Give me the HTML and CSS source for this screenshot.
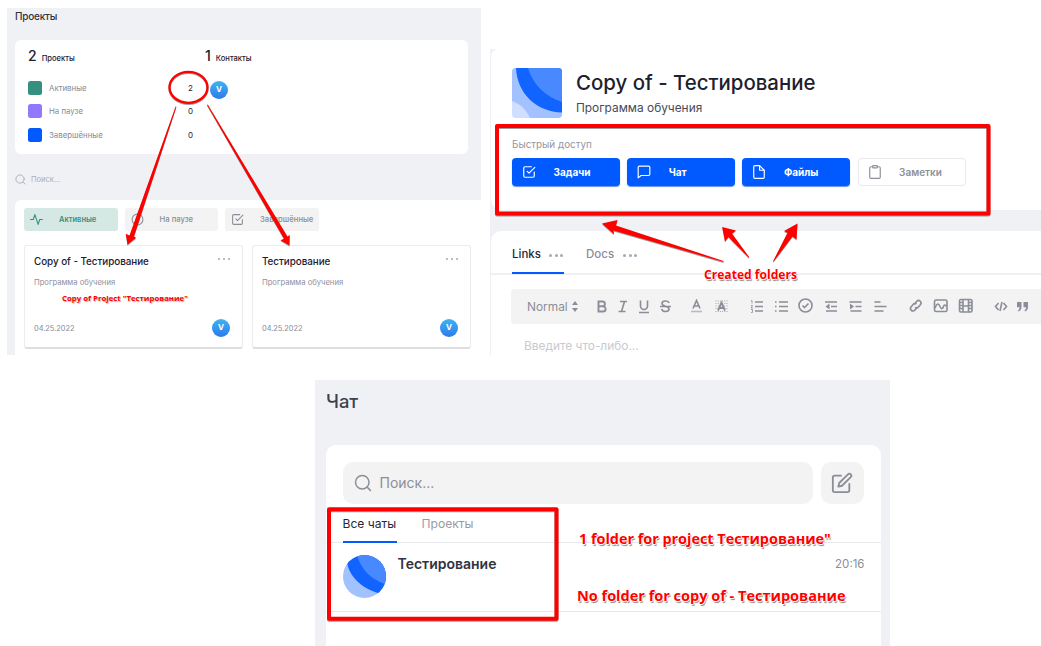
FILE: index.html
```html
<!DOCTYPE html>
<html lang="ru">
<head>
<meta charset="utf-8">
<title>Проекты</title>
<link rel="stylesheet" href="styles.css">
</head>
<body>
<svg class="defs" width="0" height="0">
  <symbol id="check" viewBox="0 0 24 24"><path d="M9 11l3 3L22 4"/><path d="M21 12v7a2 2 0 0 1-2 2H5a2 2 0 0 1-2-2V5a2 2 0 0 1 2-2h11"/></symbol>
  <symbol id="search" viewBox="0 0 24 24"><circle cx="11" cy="11" r="9"/><path d="M17.5 17.5L22 22"/></symbol>
</svg>
<main class="board">
  <div class="top">
    <section class="projects">
      <h1 class="projects-title"><span>Проекты</span></h1>
      <div class="stats">
        <div class="stats-left">
          <div class="stat-head"><b>2</b><span>Проекты</span></div>
          <div class="stat-row"><i class="swatch green"></i><span>Активные</span><em>2</em></div>
          <div class="stat-row"><i class="swatch purple"></i><span>На паузе</span><em>0</em></div>
          <div class="stat-row"><i class="swatch blue"></i><span>Завершённые</span><em>0</em></div>
        </div>
        <div class="stats-right">
          <div class="stat-head"><b>1</b><span>Контакты</span></div>
          <div class="avatar">V</div>
        </div>
      </div>
      <div class="find"><svg class="ic" width="11" height="11"><use href="#search"/></svg><span>Поиск...</span></div>
      <div class="list">
        <div class="filters">
          <div class="filter on"><svg class="ic" width="13" height="13" viewBox="0 0 24 24"><path d="M1 12h5l3-9 6 18 3-9h5"/></svg><span>Активные</span></div>
          <div class="filter"><svg class="ic" width="13" height="13" viewBox="0 0 24 24"><circle cx="12" cy="12" r="10"/><path d="M10 9v6M14 9v6"/></svg><span>На паузе</span></div>
          <div class="filter"><svg class="ic" width="13" height="13"><use href="#check"/></svg><span>Завершённые</span></div>
        </div>
        <div class="cards">
          <article class="card">
            <div class="card-head"><h2>Copy of - Тестирование</h2><span class="dots"><i></i><i></i><i></i></span></div>
            <p>Программа обучения</p>
            <div class="card-foot"><time>04.25.2022</time><div class="avatar">V</div></div>
          </article>
          <article class="card">
            <div class="card-head"><h2>Тестирование</h2><span class="dots"><i></i><i></i><i></i></span></div>
            <p>Программа обучения</p>
            <div class="card-foot"><time>04.25.2022</time><div class="avatar">V</div></div>
          </article>
        </div>
      </div>
    </section>

    <section class="detail">
      <header class="detail-head">
        <div class="identity">
          <svg class="cover" width="50" height="50" viewBox="0 0 50 50"><rect width="50" height="50" fill="#d0dfff"/><path d="M0 0H50V50H18C14 41 8 36 0 33Z" fill="#a2c1ff"/><path d="M4 0H50V44.500C24 44 5 25 4 0Z" fill="#1164ff"/><path d="M16 0H50V34C34 29 21 17 16 0Z" fill="#4889ff"/></svg>
          <div><h2 class="detail-title">Copy of - Тестирование</h2><p class="detail-sub">Программа обучения</p></div>
        </div>
        <p class="quick-label"><span>Быстрый доступ</span></p>
        <div class="quick">
          <div class="btn"><svg class="ic" width="14" height="14"><use href="#check"/></svg><span>Задачи</span></div>
          <div class="btn"><svg class="ic" width="14" height="14" viewBox="0 0 24 24"><path d="M22 16a2 2 0 0 1-2 2H7l-5 4V4a2 2 0 0 1 2-2h16a2 2 0 0 1 2 2z"/></svg><span>Чат</span></div>
          <div class="btn"><svg class="ic" width="14" height="14" viewBox="0 0 24 24"><path d="M13 1H5a2 2 0 0 0-2 2v18a2 2 0 0 0 2 2h14a2 2 0 0 0 2-2V9z"/><path d="M13 1v8h8"/></svg><span>Файлы</span></div>
          <div class="btn plain"><svg class="ic" width="14" height="14" viewBox="0 0 24 24"><path d="M16 3h3a2 2 0 0 1 2 2v16a2 2 0 0 1-2 2H5a2 2 0 0 1-2-2V5a2 2 0 0 1 2-2h3"/><rect x="8" y="1" width="8" height="4" rx="1"/></svg><span>Заметки</span></div>
        </div>
      </header>
      <div class="notes">
        <nav class="tabs">
          <div class="tab on"><span>Links</span><span class="dots big"><i></i><i></i><i></i></span></div>
          <div class="tab"><span>Docs</span><span class="dots big"><i></i><i></i><i></i></span></div>
        </nav>
        <div class="toolbar">
          <span class="style-pick">Normal</span>
          <svg class="tools" width="469" height="35" viewBox="572 289 469 35">
            <g class="solid"><path d="M572 305l3-4 3 4zM572 308l3 4 3-4z"/></g>
            <g class="bold"><path d="M598.500 301.500h4a2.300 2.300 0 0 1 0 4.800h-4zM598.500 306.300h4.500a2.500 2.500 0 0 1 0 5.200h-4.500z"/></g>
            <g class="line">
              <path d="M620 301.500h7M618.500 311.500h7M624.500 301.500l-3 10"/>
              <path d="M640.500 300.500v5.500a3.500 3.500 0 0 0 7 0v-5.500M639 312.500h10"/>
              <path d="M669 303c-.5-1.500-2-2-3.500-2-2 0-3.500 1-3.500 2.500 0 3.500 7 2 7 5.500 0 1.500-1.500 2.500-3.500 2.500s-3.500-1-3.800-2.500M660 306.500h11"/>
              <path d="M693 308.500l3.500-8 3.500 8M694.500 306h4"/><path class="light" d="M691 311.500h11"/>
            </g>
            <path class="hatch" d="M715.500 301h12M715.500 303.500h12M715.500 306h12M715.500 308.500h12M715.500 311.500h12"/>
            <g class="bold"><path d="M718 310.500l3.500-8 3.500 8M719.500 308h4"/></g>
            <g class="line">
              <path d="M755 302h8M755 306.500h8M755 311h8"/><path class="fine" d="M751 300.500h1v3M751 305.500h1.500l-1.500 2.500h2M751 309.500h1.500v3H751"/>
              <path d="M779 302h9M779 306.500h9M779 311h9M775 302h1.500M775 306.500h1.500M775 311h1.500"/>
              <circle cx="805.500" cy="305.500" r="6.500"/><path d="M802.500 305.500l2 2 4-4"/>
              <path d="M825 302h12M831 306.500h6M826 311h11"/>
              <path d="M849.500 302h12M855.500 306.500h6M850.500 311h11"/>
              <path d="M874.500 302h6M874.500 306.500h12M874.500 311h9"/>
              <path d="M914 304.500l3-3.500a2.500 2.500 0 0 1 3.500 3.500l-2.500 3a2.500 2.500 0 0 1-3 0M917.500 307l-2.500 3a2.500 2.500 0 0 1-4-3l2.500-3a2.500 2.500 0 0 1 3 0"/>
              <rect x="934.500" y="300" width="12.500" height="11.500" rx="1.500"/><path d="M935 308c2-5 3.500-5 5-1.500s3 2 3.500 0 2-2 3 0"/>
              <rect x="959.500" y="299.500" width="12.500" height="12.500" rx="1.500"/><path d="M963 299.500v12.500M968.500 299.500v12.500M963 306h5.500M959.500 302.500h3.500M959.500 305.500h3.500M959.500 308.500h3.500M968.500 302.500h3.500M968.500 305.500h3.500M968.500 308.500h3.500"/>
              <path d="M998.500 303l-3 3.500 3 3.500M1003.500 303l3 3.500-3 3.500M1002 302l-2 9"/>
            </g>
            <g class="solid"><path d="M825.500 306.500l4-3v6zM854 306.500l-4-3v6z"/><path d="M1017 302h4.500v5c0 2-1 4-3 4.500l-.5-1.200c1-.5 1.500-1.500 1.500-3h-2.500zM1023.500 302h4.500v5c0 2-1 4-3 4.500l-.5-1.200c1-.5 1.500-1.500 1.500-3h-2.500z"/></g>
          </svg>
        </div>
        <p class="placeholder"><span>Введите что-либо...</span></p>
      </div>
    </section>
  </div>

  <section class="chat">
    <h2 class="chat-title">Чат</h2>
    <div class="chat-box">
      <div class="chat-search">
        <div class="field"><svg class="ic" width="18" height="18"><use href="#search"/></svg><span>Поиск...</span></div>
        <div class="compose"><svg class="ic" width="22" height="22" viewBox="0 0 24 24"><path d="M11 4H4a2 2 0 0 0-2 2v14a2 2 0 0 0 2 2h14a2 2 0 0 0 2-2v-7"/><path d="M18.500 2.500a2.121 2.121 0 0 1 3 3L12 15l-4 1 1-4 9.500-9.500z"/></svg></div>
      </div>
      <nav class="chat-tabs"><div class="on">Все чаты</div><div>Проекты</div></nav>
      <div class="thread">
        <svg class="thread-pic" width="43" height="43" viewBox="0 0 43 43"><rect width="43" height="43" fill="#a2c1ff"/><path d="M4 0H43V38H35C18 33 6 21 4 7Z" fill="#1164ff"/><path d="M14 0H43V29.500C29 25 18 15 14 0Z" fill="#4889ff"/></svg>
        <span class="thread-name">Тестирование</span><time>20:16</time>
      </div>
    </div>
  </section>
</main>

<svg class="marks" width="1041" height="646" viewBox="0 0 1041 646">
  <g class="boxes"><ellipse cx="188.500" cy="87.300" rx="19" ry="15.500"/><rect x="497" y="126" width="491.500" height="87.500"/><rect x="329" y="509.200" width="227.500" height="109.500"/></g>
  <g class="arrows">
    <path d="M175.600 106.500l.8.300-42.400 129.700 2 1.200-8.500 7-1.700-11 3.700 1.700z"/>
    <path d="M207 105l.8-.5 79.700 132 2.200-1.500-.2 10.500-9-5.200 3.500-1.500z"/>
    <path d="M723.500 261.900L613.500 230.500L614 234.300L602 223.500L617.500 220L616 225.500L723.500 261Z"/>
    <path d="M748.800 257.800L728.500 237L725 241.500L722.200 227L736 230.500L732 233.500L749.300 257.300Z"/>
    <path d="M773 261.300L787.500 232.800L784 231L797.500 223.500L796.500 239.500L792.500 236.500L773.600 261.600Z"/>
  </g>
</svg>
<div class="note n1">Copy of Project "Тестирование"</div>
<div class="note n2">Created folders</div>
<div class="note n3">1 folder for project Тестирование"</div>
<div class="note n4">No folder for copy of - Тестирование</div>
</body>
</html>
```
FILE: styles.css
```css
* { box-sizing: border-box; margin: 0; padding: 0; }
body { width: 1041px; height: 646px; overflow: hidden; position: relative; background: #fff; font-family: Inter, "Open Sans", sans-serif; color: #1d2030; }
h1, h2, b { font-weight: 500; }
em, i { font-style: normal; }
span, time, h2, .note { white-space: nowrap; }
.defs { position: absolute; }
.ic { fill: none; stroke: currentColor; stroke-width: 2; stroke-linecap: round; stroke-linejoin: round; flex: none; }
.board { display: flex; flex-direction: column; height: 646px; padding-top: 8px; }
.top { display: flex; gap: 9px; height: 372px; padding-left: 7px; align-items: flex-start; }

.projects { width: 474px; height: 347px; background: #f0f1f5; padding-left: 8px; overflow: hidden; }
.projects-title { height: 32px; line-height: 17px; font-size: 10px; letter-spacing: -.2px; color: #30333f; }
.stats { display: flex; width: 453px; height: 114px; border-radius: 6px; background: #fff; padding: 6px 13px; }
.stats-left { width: 177px; }
.stat-head { display: flex; align-items: baseline; gap: 5px; height: 30px; line-height: 19px; }
.stat-head b { font-size: 14px; }
.stat-head span { font-size: 7.600px; font-weight: 500; }
.stat-row { display: flex; align-items: center; height: 23.500px; font-size: 7.850px; color: #858995; }
.stat-row span { width: 139px; margin-left: 7px; }
.stat-row em { color: #252838; font-size: 8px; }
.swatch { width: 14px; height: 14px; border-radius: 2.500px; }
.green { background: #359080; }
.purple { background: #9278ff; }
.blue { background: #005aff; }
.avatar { width: 18px; height: 18px; border-radius: 50%; background: linear-gradient(#3db4f1, #2e7be9); color: #fff; font-size: 8px; font-weight: 700; line-height: 17px; text-align: center; }
.stats-right .avatar { margin: 5px 0 0 5px; }
.find { display: flex; align-items: center; gap: 5px; height: 46px; padding-top: 4px; font-size: 7.500px; color: #a9adba; }
.list { height: 155px; background: #fff; border-top-left-radius: 6px; padding: 8px 0 0 9px; }
.filters { display: flex; gap: 7px; height: 37px; }
.filter { display: flex; align-items: center; width: 93.500px; height: 23px; border-radius: 3px; background: #f3f3f3; color: #8b8e98; font-size: 7.700px; font-weight: 500; padding-left: 6px; }
.filter span { margin-left: 16px; }
.filter.on { background: #d5e8e4; color: #359080; }
.filter.on span { font-weight: 600; font-size: 7.500px; }
.cards { display: flex; gap: 9px; }
.card { width: 219px; height: 104px; border: 1px solid #ececef; border-bottom: 2px solid #dedee1; border-radius: 3px; padding: 8px 12px 0 9px; }
.card-head { display: flex; justify-content: space-between; }
.card h2 { font-size: 9.900px; line-height: 14px; letter-spacing: -.05px; }
.dots { display: flex; gap: 2.500px; margin-top: 4px; height: 2px; }
.dots i { width: 2.300px; height: 2.300px; border-radius: 50%; background: #a3a8b7; }
.card p { font-size: 7.650px; line-height: 12px; margin-top: 9px; color: #8e919c; }
.card-foot { display: flex; justify-content: space-between; align-items: center; margin-top: 30px; font-size: 7.400px; color: #858995; }

.detail { width: 551px; height: 306px; margin-top: 41px; background: #f0f1f5; padding-left: 1px; }
.detail-head { height: 161px; background: #fff; padding: 19px 0 0 21px; border-radius: 8px 0 0 10px; }
.identity { display: flex; gap: 14px; height: 66px; }
.cover { border-radius: 4px; }
.detail-title { font-size: 20.400px; line-height: 30px; }
.detail-sub { font-size: 11.900px; line-height: 19px; color: #474a58; }
.quick-label { font-size: 9.900px; line-height: 20px; height: 24px; color: #93969f; }
.quick { display: flex; gap: 7.200px; }
.btn { display: flex; align-items: center; width: 108px; height: 28px; border-radius: 4px; background: #005aff; color: #fff; font-size: 10px; font-weight: 700; padding-left: 10px; box-shadow: 0 1px 1px #6591e8; }
.btn span { margin-left: 17.500px; }
.btn.plain { background: #fff; color: #8d909a; font-weight: 600; border: 1px solid #e9e9ec; box-shadow: none; padding-left: 9px; }
.notes { height: 124px; margin-top: 21px; background: #fff; border-top-left-radius: 10px; }
.tabs { display: flex; gap: 22px; height: 44px; border-bottom: 2px solid #eff0f3; padding-left: 21px; font-size: 11.500px; font-weight: 500; color: #8b8e98; }
.tab { display: flex; justify-content: space-between; width: 52px; height: 43px; line-height: 46px; }
.tab.on { color: #252838; border-bottom: 2px solid #005aff; }
.dots.big { margin: 22.500px 1px 0 0; gap: 2.500px; }
.dots.big i { width: 3px; height: 3px; }
.toolbar { display: flex; height: 35px; margin: 14px 0 0 19.500px; background: #f3f3f3; border-radius: 4px 0 0 4px; padding-left: 16.500px; color: #8b8e98; }
.style-pick { width: 45px; font-size: 11.900px; line-height: 35px; }
.tools { fill: none; stroke: #8b8e98; stroke-width: 1.600; }
.tools .solid { fill: #8b8e98; stroke: none; }
.tools .bold { stroke-width: 1.900; }
.tools .fine { stroke-width: .8; }
.tools .light { stroke: #b9bbc1; }
.hatch { stroke: #a5a8af; stroke-width: 1; stroke-dasharray: 1 1.200; }
.placeholder { font-size: 11.900px; line-height: 20px; margin-top: 12px; padding-left: 33px; color: #c8cad0; }

.chat { width: 575px; height: 266px; margin-left: 315px; background: #f0f1f5; padding: 0 9px 0 11px; }
.chat-title { font-size: 18.400px; line-height: 43px; height: 64.500px; color: #3e414d; }
.chat-box { height: 202px; background: #fff; border-radius: 10px 10px 0 0; padding-top: 17px; }
.chat-search { display: flex; gap: 8.500px; padding-left: 16.500px; }
.field { display: flex; align-items: center; gap: 8px; width: 470px; height: 42px; background: #f3f3f3; border-radius: 10px; padding-left: 11px; color: #8b8e98; font-size: 14px; }
.compose { display: flex; align-items: center; justify-content: center; width: 42.500px; height: 42px; border-radius: 10px; background: #f3f3f3; color: #8b8e98; }
.chat-tabs { display: flex; gap: 25px; height: 39px; border-bottom: 1px solid #e7e8ec; padding-left: 16.500px; font-size: 12.100px; line-height: 40px; color: #989ba4; }
.chat-tabs .on { width: 54px; white-space: nowrap; color: #252838; border-bottom: 2px solid #005aff; height: 39px; }
.thread { display: flex; height: 69px; border-bottom: 1px solid #e7e8ec; padding: 12px 16.500px 0; }
.thread-pic { border-radius: 50%; }
.thread-name { flex: 1; margin-left: 12px; font-size: 14px; font-weight: 600; line-height: 17px; color: #303341; }
.thread time { font-size: 11.500px; line-height: 18px; color: #8b8e98; }

.marks { position: absolute; left: 0; top: 0; filter: drop-shadow(.5px 1px .5px rgba(60, 60, 60, .5)); }
.boxes { fill: none; stroke: #f00; stroke-width: 4; stroke-linejoin: round; }
.boxes ellipse { stroke-width: 2.300; }
.arrows { fill: #f00; }
.note { position: absolute; color: #f00; font-family: "Open Sans", "Noto Sans", sans-serif; font-weight: 700; text-shadow: 1px 0 #fff, -1px 0 #fff, 0 1px #fff, 1px 2px 1px #888; }
.n1 { left: 62px; top: 291px; font-size: 7.800px; line-height: 14px; text-shadow: 1px 1px 1px #bbb; }
.n2 { left: 704px; top: 265px; font-size: 12.100px; line-height: 20px; }
.n3 { left: 579px; top: 528px; font-size: 14.400px; line-height: 22px; }
.n4 { left: 577px; top: 585px; font-size: 14.500px; line-height: 22px; }
```
